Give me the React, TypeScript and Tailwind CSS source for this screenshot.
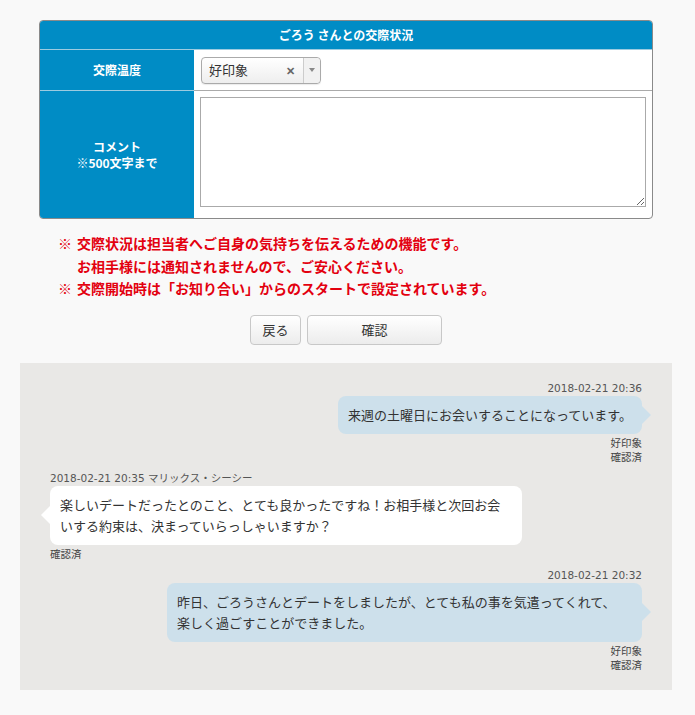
import React from "react";

const font = { fontFamily: '"Noto Sans CJK JP", "Noto Sans", sans-serif' };
const metaFont = { fontFamily: '"DejaVu Sans", "Noto Sans CJK JP", sans-serif' };

type Msg = {
  mine: boolean;
  time: string;
  name?: string;
  lines: string[];
  width?: string;
  level?: string;
};

const messages: Msg[] = [
  {
    mine: true,
    time: "2018-02-21 20:36",
    lines: ["来週の土曜日にお会いすることになっています。"],
    level: "好印象",
  },
  {
    mine: false,
    time: "2018-02-21 20:35",
    name: "マリックス・シーシー",
    lines: [
      "楽しいデートだったとのこと、とても良かったですね！お相手様と次回お会",
      "いする約束は、決まっていらっしゃいますか？",
    ],
    width: "w-[472px]",
  },
  {
    mine: true,
    time: "2018-02-21 20:32",
    lines: [
      "昨日、ごろうさんとデートをしましたが、とても私の事を気遣ってくれて、",
      "楽しく過ごすことができました。",
    ],
    width: "w-[475px]",
    level: "好印象",
  },
];

const Text: React.FC<{ lines: string[] }> = ({ lines }) => (
  <>
    {lines.map((l, i) => (
      <div key={i} className="whitespace-nowrap">
        {l}
      </div>
    ))}
  </>
);

const Bubble: React.FC<{ msg: Msg }> = ({ msg }) => {
  if (msg.mine) {
    return (
      <div className="flex flex-col items-end">
        <div className="mb-[1px] text-[10.5px] leading-[14px] text-[#555]" style={metaFont}>
          {msg.time}
        </div>
        <div
          className={`relative rounded-[8px] bg-[#cde0eb] px-[10px] py-[8.5px] text-[13px] leading-[21px] text-[#333] ${msg.width ?? ""}`}
        >
          <Text lines={msg.lines} />
          <span className="absolute right-[-9px] top-1/2 -translate-y-1/2 border-y-[9px] border-l-[9px] border-y-transparent border-l-[#cde0eb]" />
        </div>
        <div className="mt-[2px] text-right text-[10.5px] leading-[14px] text-[#444]">
          {msg.level && <div>{msg.level}</div>}
          <div>確認済</div>
        </div>
      </div>
    );
  }
  return (
    <div className="flex flex-col items-start">
      <div className="mb-[1px] text-[10.5px] leading-[14px] text-[#555]" style={metaFont}>
        {msg.time} {msg.name}
      </div>
      <div
        className={`relative rounded-[8px] bg-white px-[10px] py-[8.5px] text-[13px] leading-[21px] text-[#333] ${msg.width ?? ""}`}
      >
        <Text lines={msg.lines} />
        <span className="absolute left-[-9px] top-1/2 -translate-y-1/2 border-y-[9px] border-r-[9px] border-y-transparent border-r-white" />
      </div>
      <div className="mt-[2px] text-[10.5px] leading-[14px] text-[#444]">確認済</div>
    </div>
  );
};

const App: React.FC = () => {
  return (
    <div
      className="min-h-[715px] bg-[#f9f9f9] pl-[20px] pr-[23px] pt-[20px] pb-[25px] [text-spacing-trim:space-all]"
      style={font}
    >
      <div className="mx-[19px] overflow-hidden rounded-[4px] border border-[#8a8a8a] bg-white">
        <div className="flex h-[28px] items-center justify-center bg-[#008cc5] text-[12px] font-bold text-white">
          ごろう さんとの交際状況
        </div>
        <div className="flex h-[41px] border-t border-[#9ccbe0]">
          <div className="flex w-[154px] items-center justify-center bg-[#008cc5] text-[12px] font-bold text-white">
            交際温度
          </div>
          <div className="flex flex-1 items-center px-[7px]">
            <div className="flex h-[27px] w-[120px] items-center rounded-[4px] border border-[#aaa] bg-gradient-to-b from-white to-[#eee] shadow-[0_1px_1px_rgba(0,0,0,0.08)]">
              <span className="flex-1 pl-[7px] text-[13px] text-[#333]">好印象</span>
              <span className="mr-[8px] text-[11px] font-bold text-[#666]">✕</span>
              <span className="flex h-full w-[17px] items-center justify-center rounded-r-[4px] border-l border-[#ccc] bg-[#f1f1f1]">
                <span className="border-x-[3px] border-t-[4px] border-x-transparent border-t-[#888]" />
              </span>
            </div>
          </div>
        </div>
        <div className="flex h-[128px]">
          <div className="flex w-[154px] flex-col items-center justify-center border-t border-[#9ccbe0] bg-[#008cc5] text-[12px] font-bold leading-[16px] text-white">
            <span>コメント</span>
            <span>※500文字まで</span>
          </div>
          <div className="flex-1 border-t border-[#aaa] p-[6px]">
            <textarea className="block h-[110px] w-full border border-[#aaa] bg-white outline-none" />
          </div>
        </div>
      </div>

      <div className="mt-[13px] pl-[38px] text-[14px] font-bold leading-[22.5px] text-[#e3000f]">
        <div className="flex">
          <span className="w-[19px]">※</span>
          <span>
            交際状況は担当者へご自身の気持ちを伝えるための機能です。
            <br />
            お相手様には通知されませんので、ご安心ください。
          </span>
        </div>
        <div className="flex">
          <span className="w-[19px]">※</span>
          <span>交際開始時は「お知り合い」からのスタートで設定されています。</span>
        </div>
      </div>

      <div className="mt-[15px] flex justify-center gap-[6px]">
        <button className="h-[30px] w-[51px] rounded-[4px] border border-[#c8c8c8] bg-gradient-to-b from-white to-[#ececec] text-[13px] text-[#333]">
          戻る
        </button>
        <button className="h-[30px] w-[135px] rounded-[4px] border border-[#c8c8c8] bg-gradient-to-b from-white to-[#ececec] text-[13px] text-[#333]">
          確認
        </button>
      </div>

      <div className="mt-[18px] flex flex-col gap-[7px] bg-[#e9e8e6] px-[30px] pt-[18px] pb-[18px]">
        {messages.map((m, i) => (
          <Bubble key={i} msg={m} />
        ))}
      </div>
    </div>
  );
};

export default App;
